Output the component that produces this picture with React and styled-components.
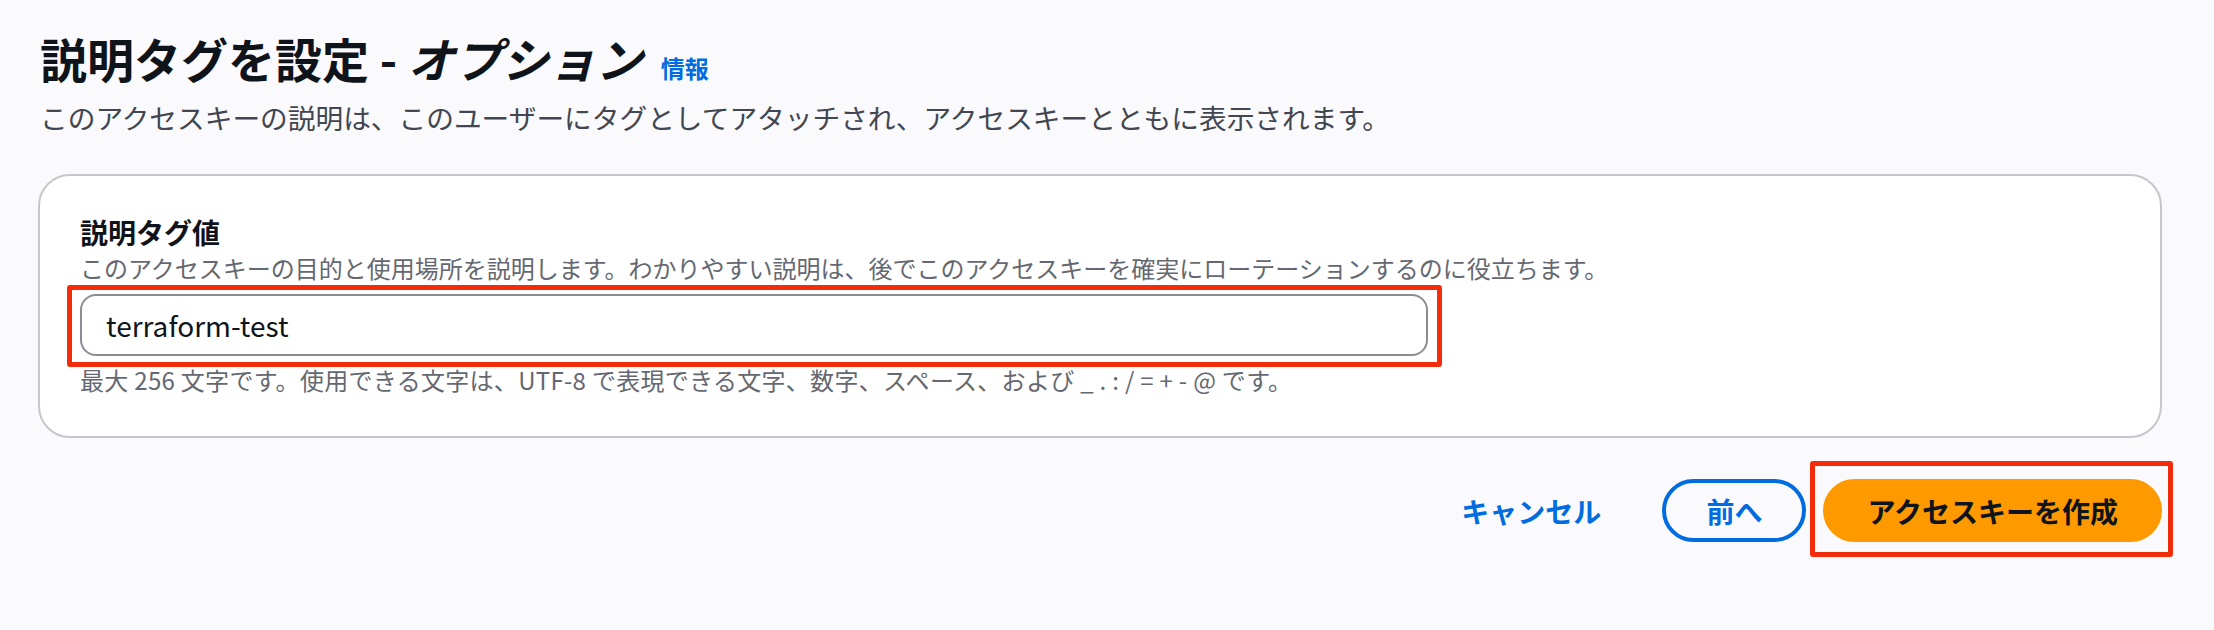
import React from "react";
import styled, { createGlobalStyle } from "styled-components";

const GlobalStyle = createGlobalStyle`
  html, body {
    margin: 0;
    padding: 0;
    background: #fafafc;
  }
  body {
    font-family: "Noto Sans CJK JP", "Noto Sans", sans-serif;
    color: #0f141a;
  }
`;

const Page = styled.div`
  width: 2214px;
  height: 630px;
  box-sizing: border-box;
  padding: 28px 52px 0 38px;
  background: #fafafc;
`;

const Header = styled.header`
  display: flex;
  flex-direction: column;
  gap: 9px;
`;

const Title = styled.h1`
  margin: 0;
  padding-left: 2px;
  font-size: 47px;
  line-height: 60px;
  font-weight: 700;
  color: #0f141a;

  em {
    font-style: italic;
  }
`;

const InfoLink = styled.a`
  margin-left: 18px;
  font-size: 24px;
  line-height: 24px;
  font-weight: 700;
  color: #006ce0;
  text-decoration: none;
  font-style: normal;
`;

const Subtitle = styled.p`
  margin: 0;
  padding-left: 2px;
  font-size: 27.7px;
  line-height: 40px;
  color: #424650;
`;

const Card = styled.section`
  margin-top: 37px;
  background: #ffffff;
  border: 2px solid #c6c6cd;
  border-radius: 32px;
  padding: 36px 40px 40px;
`;

const Label = styled.label`
  display: block;
  font-size: 28px;
  line-height: 40px;
  font-weight: 700;
  color: #0f141a;
`;

const Hint = styled.div`
  font-size: 24px;
  line-height: 32px;
  color: #656871;
  margin-top: ${(p) => p.$top || 0}px;
  letter-spacing: ${(p) => p.$spread || 0}px;
`;

const Highlight = styled.div`
  position: relative;
  display: ${(p) => (p.$block ? "block" : "inline-block")};
  width: ${(p) => (p.$block ? "fit-content" : "auto")};

  &::after {
    content: "";
    position: absolute;
    top: -${(p) => p.$t}px;
    left: -${(p) => p.$l}px;
    right: -${(p) => p.$r}px;
    bottom: -${(p) => p.$b}px;
    border: 5px solid #f32d0c;
    border-radius: 3px;
    pointer-events: none;
  }
`;

const InputWrap = styled.div`
  margin-top: 10px;
`;

const Input = styled.input`
  display: block;
  box-sizing: border-box;
  width: 1348px;
  height: 62px;
  padding: 0 24px;
  border: 2px solid #8c8c94;
  border-radius: 16px;
  background: #ffffff;
  font-family: "Noto Sans CJK JP", "Noto Sans", sans-serif;
  font-size: 28px;
  color: #0f141a;
  outline: none;
`;

const Footer = styled.div`
  display: flex;
  justify-content: flex-end;
  align-items: center;
  gap: 17px;
  margin-top: 41px;
`;

const Button = styled.button`
  box-sizing: border-box;
  height: 63px;
  padding: 0 40px;
  border-radius: 40px;
  border: 4px solid
    ${(p) =>
      p.$variant === "normal"
        ? "#006ce0"
        : p.$variant === "primary"
        ? "#ff9900"
        : "transparent"};
  background: ${(p) => (p.$variant === "primary" ? "#ff9900" : "transparent")};
  color: ${(p) => (p.$variant === "primary" ? "#0f141a" : "#006ce0")};
  font-family: "Noto Sans CJK JP", "Noto Sans", sans-serif;
  font-size: 28px;
  font-weight: 700;
  line-height: 1;
  cursor: pointer;
`;

export default function App() {
  return (
    <Page>
      <GlobalStyle />
      <Header>
        <Title>
          説明タグを設定 - <em>オプション</em>
          <InfoLink href="#">情報</InfoLink>
        </Title>
        <Subtitle>
          このアクセスキーの説明は、このユーザーにタグとしてアタッチされ、アクセスキーとともに表示されます。
        </Subtitle>
      </Header>

      <Card>
        <Label htmlFor="desc-tag">説明タグ値</Label>
        <Hint>
          このアクセスキーの目的と使用場所を説明します。わかりやすい説明は、後でこのアクセスキーを確実にローテーションするのに役立ちます。
        </Hint>
        <InputWrap>
          <Highlight $block $t={9} $l={13} $r={14} $b={11}>
            <Input id="desc-tag" defaultValue="terraform-test" />
          </Highlight>
        </InputWrap>
        <Hint $top={8} $spread={0.3}>
          最大 256 文字です。使用できる文字は、UTF-8 で表現できる文字、数字、スペース、および _ . : / = + - @ です。
        </Hint>
      </Card>

      <Footer>
        <Button $variant="link">キャンセル</Button>
        <Button $variant="normal">前へ</Button>
        <Highlight $t={18} $l={13} $r={11} $b={15}>
          <Button $variant="primary">アクセスキーを作成</Button>
        </Highlight>
      </Footer>
    </Page>
  );
}
